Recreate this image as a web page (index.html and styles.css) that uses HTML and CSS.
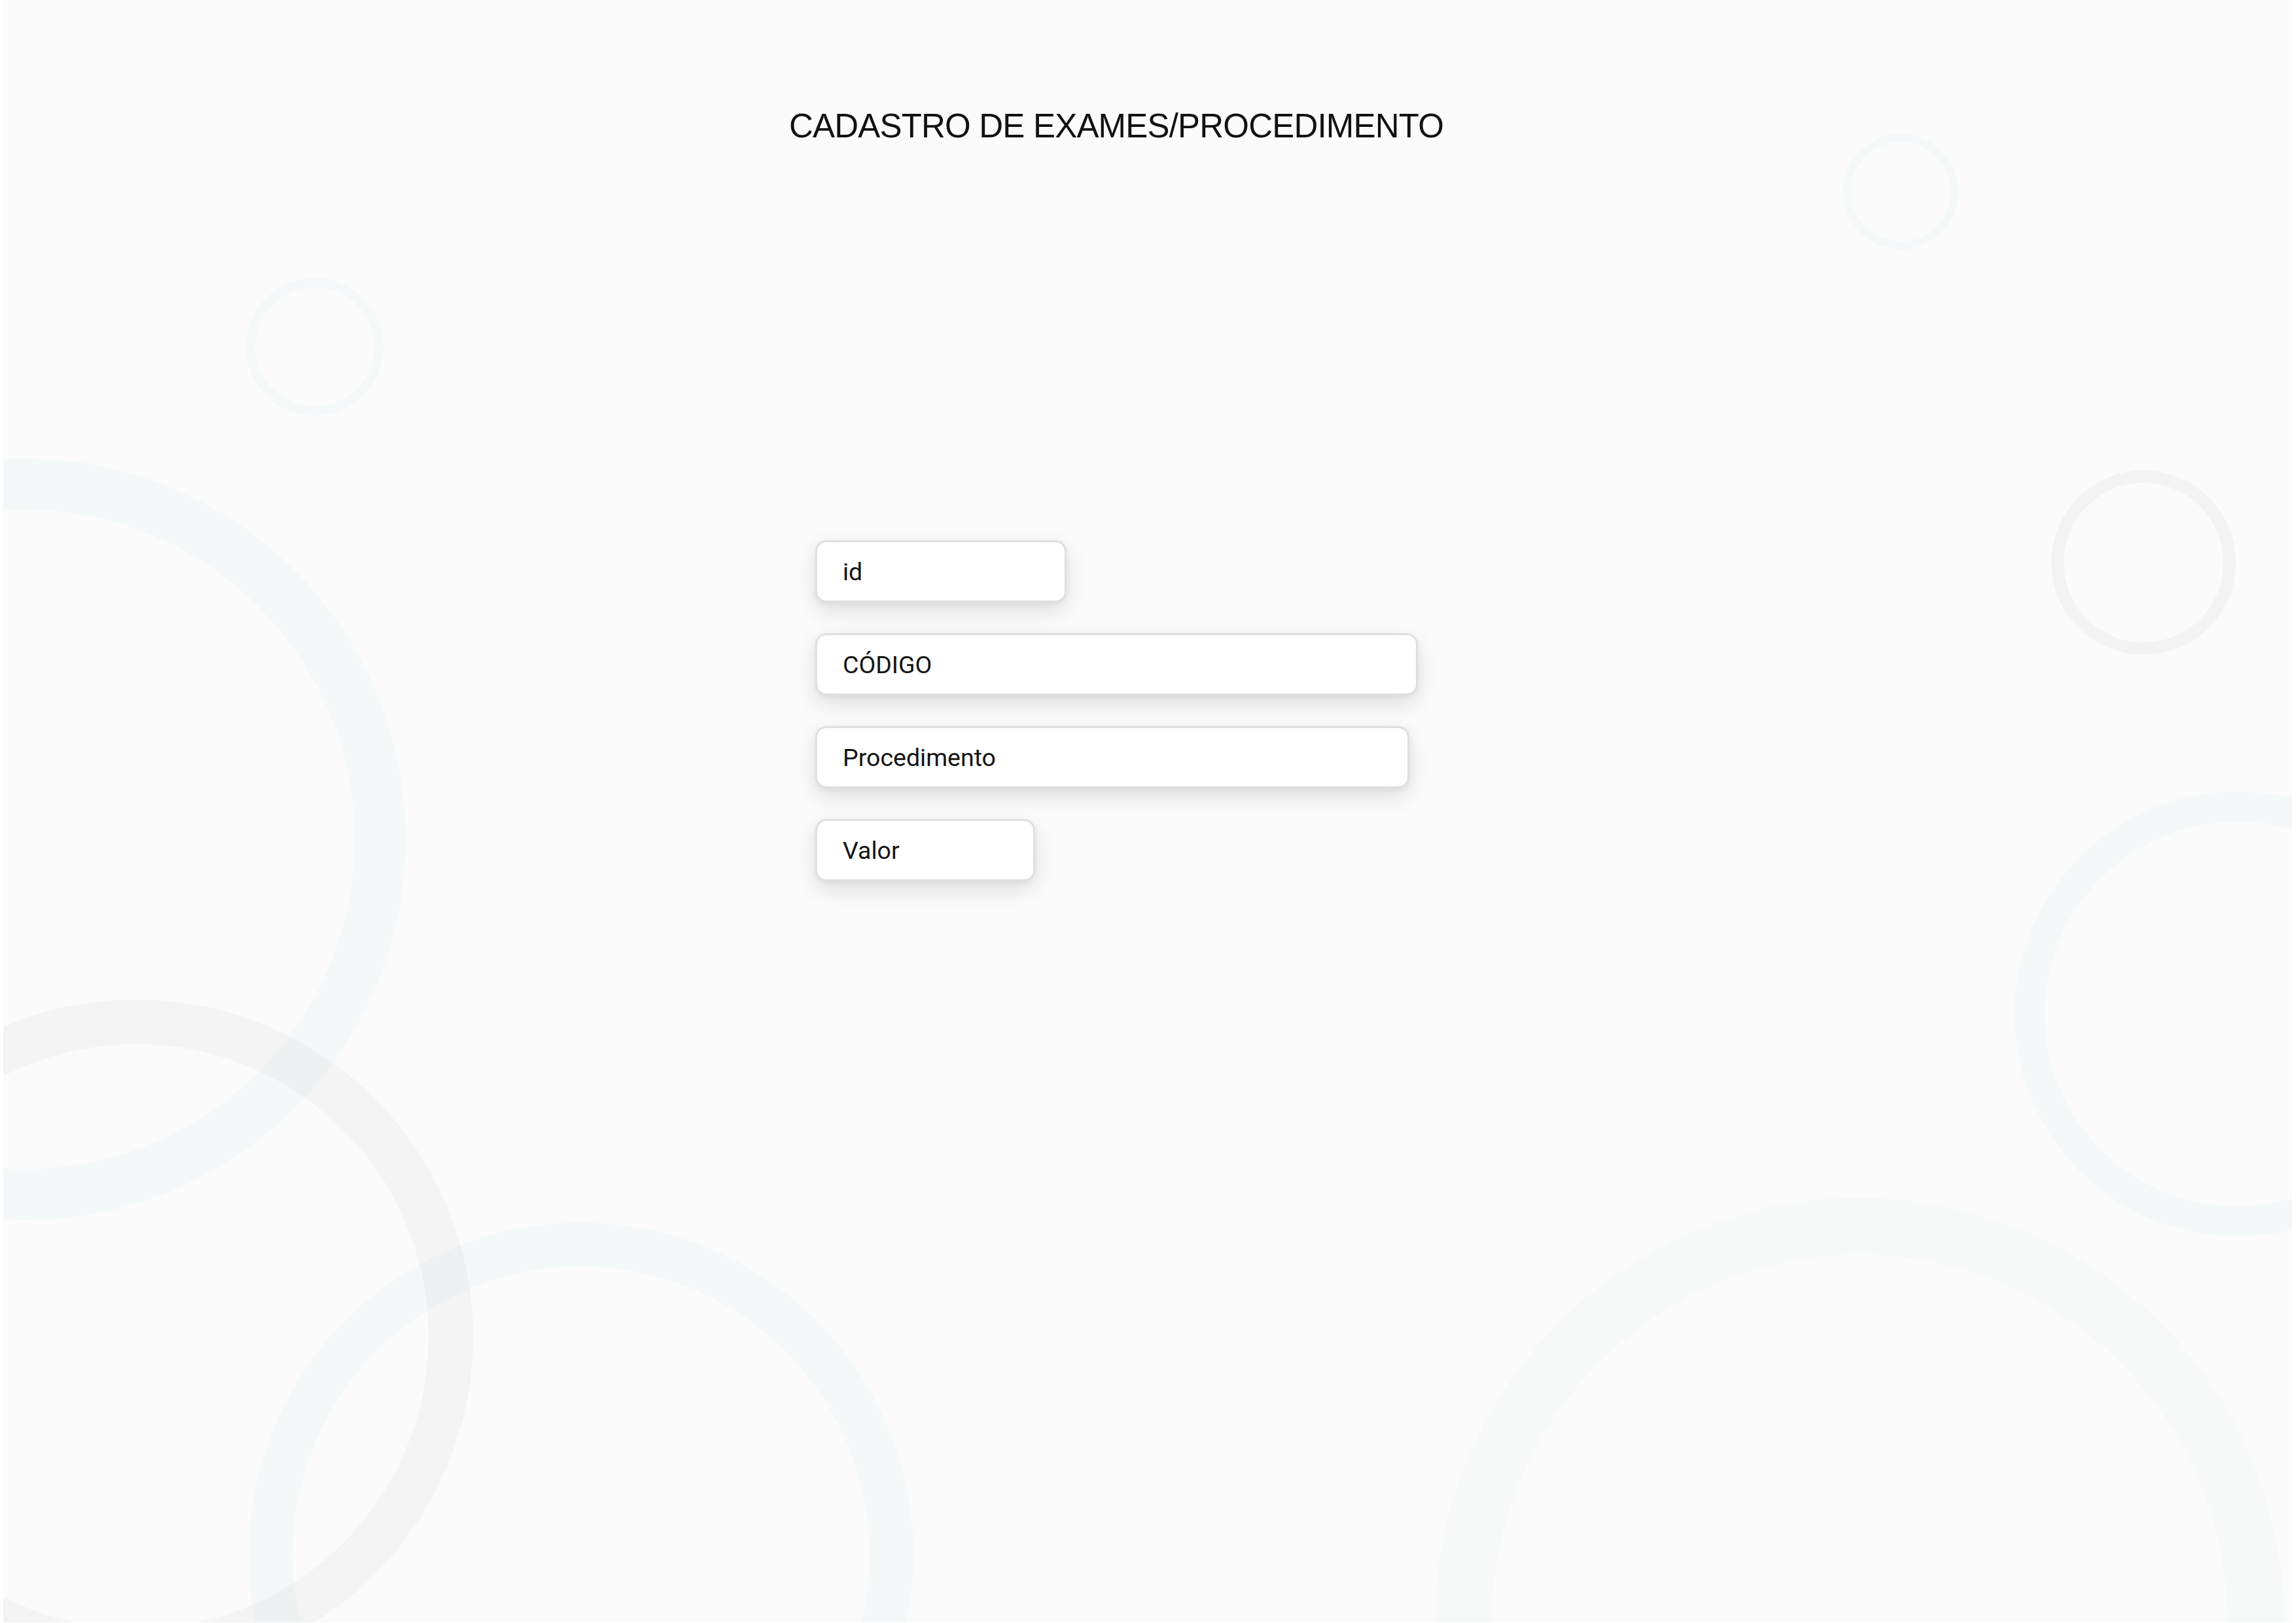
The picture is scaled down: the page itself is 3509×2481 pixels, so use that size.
FILE: index.html
```html
<!DOCTYPE html>
<html lang="pt-BR">
<head>
<meta charset="utf-8">
<title>Cadastro de Exames/Procedimento</title>
<link rel="stylesheet" href="styles.css">
</head>
<body>
<div class="page">
  <div class="bg" aria-hidden="true">
    <div class="ring ring-a"></div>
    <div class="ring ring-b"></div>
    <div class="ring ring-c"></div>
    <div class="ring ring-d"></div>
    <div class="ring ring-e"></div>
    <div class="ring ring-f"></div>
    <div class="ring ring-g"></div>
    <div class="ring ring-h"></div>
  </div>
  <h1 class="title">CADASTRO DE EXAMES/PROCEDIMENTO</h1>
  <form class="form">
    <div class="field field-id">id</div>
    <div class="field field-code">CÓDIGO</div>
    <div class="field field-proc">Procedimento</div>
    <div class="field field-valor">Valor</div>
  </form>
</div>
</body>
</html>
```

FILE: styles.css
```css
html, body {
  margin: 0;
  padding: 0;
  background: #ffffff;
}

.page {
  position: relative;
  margin-left: 5px;
  width: 3498px;
  height: 2480px;
  background: #fbfbfb;
  overflow: hidden;
}

.bg {
  position: absolute;
  inset: 0;
  z-index: 0;
}

.ring {
  position: absolute;
  box-sizing: border-box;
  border-radius: 50%;
  border-style: solid;
}

.ring-a { left: 371px;  top: 425px;  width: 210px;  height: 210px;  border-width: 14px; border-color: rgba(171, 211, 221, 0.08); }
.ring-b { left: 2812px; top: 205px;  width: 176px;  height: 176px;  border-width: 12px; border-color: rgba(171, 211, 221, 0.08); }
.ring-c { left: 3130px; top: 719px;  width: 282px;  height: 282px;  border-width: 19px; border-color: rgba(191, 181, 191, 0.11); }
.ring-d { left: -549px; top: 701px;  width: 1164px; height: 1164px; border-width: 78px; border-color: rgba(171, 211, 221, 0.08); }
.ring-e { left: -312px; top: 1528px; width: 1030px; height: 1030px; border-width: 68px; border-color: rgba(181, 181, 181, 0.09); }
.ring-f { left: 375px;  top: 1869px; width: 1016px; height: 1016px; border-width: 67px; border-color: rgba(171, 211, 221, 0.08); }
.ring-g { left: 3074px; top: 1210px; width: 680px;  height: 680px;  border-width: 46px; border-color: rgba(171, 211, 221, 0.08); }
.ring-h { left: 2188px; top: 1831px; width: 1298px; height: 1298px; border-width: 87px; border-color: rgba(200, 220, 220, 0.07); }

.title {
  position: relative;
  z-index: 1;
  margin: 0;
  padding: 163px 0 0 1201px;
  font-family: "Liberation Sans", Arial, sans-serif;
  font-weight: 400;
  font-size: 51px;
  line-height: 60px;
  letter-spacing: -0.8px;
  color: #111111;
  white-space: nowrap;
}

.form {
  position: relative;
  z-index: 1;
  margin: 603px 0 0 1241px;
  display: flex;
  flex-direction: column;
  align-items: flex-start;
  gap: 47px;
}

.field {
  box-sizing: border-box;
  height: 95px;
  display: flex;
  align-items: center;
  padding-left: 39px;
  background: #ffffff;
  border: 3px solid #e0e0e0;
  border-radius: 17px;
  box-shadow: 0 12px 32px rgba(0, 0, 0, 0.12), 0 2px 8px rgba(0, 0, 0, 0.05);
  font-family: Roboto, "Liberation Sans", sans-serif;
  font-size: 37.5px;
  color: #141414;
}

.field-id { width: 384px; }
.field-code { width: 921px; }
.field-proc { width: 908px; }
.field-valor { width: 336px; }
```
